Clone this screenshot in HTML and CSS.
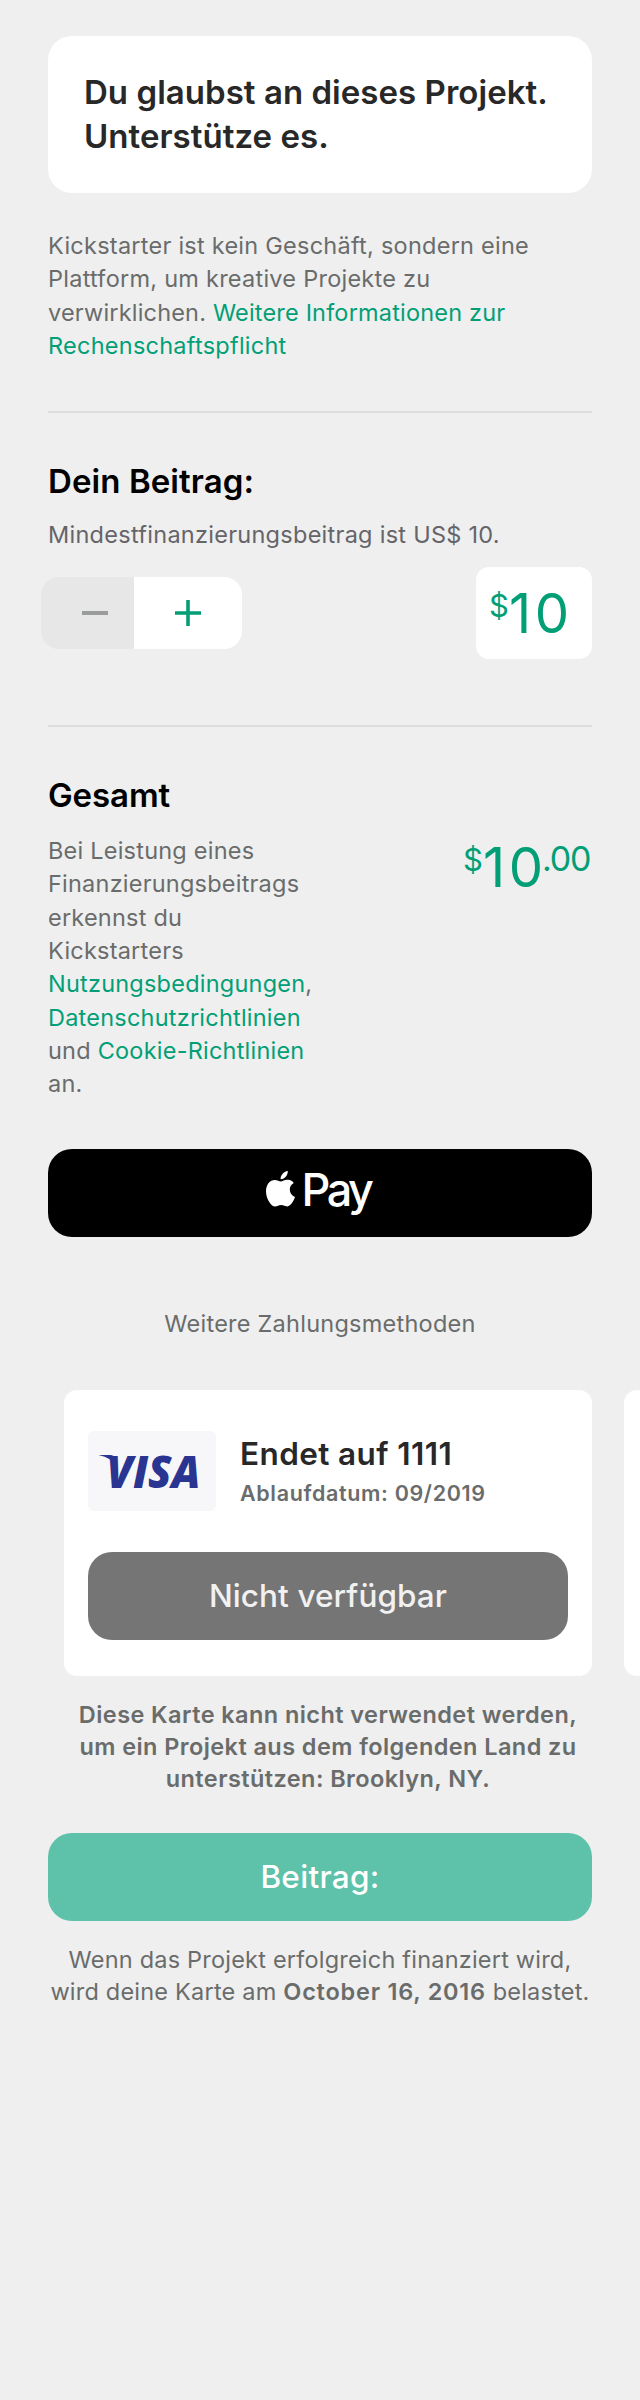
FILE: index.html
```
<!DOCTYPE html>
<html lang="de">
<head>
<meta charset="utf-8">
<title>Kickstarter – Beitrag</title>
<link rel="stylesheet" href="styles.css">
</head>
<body>
<main class="page">
  <header class="banner">Du glaubst an dieses Projekt.<br>Unterstütze es.</header>
  <p class="copy intro">Kickstarter ist kein Geschäft, sondern eine<br>Plattform, um kreative Projekte zu<br><span class="tight">verwirklichen. <a class="link">Weitere Informationen zur</a></span><br><a class="link">Rechenschaftspflicht</a></p>

  <section class="section pledge">
    <h2 class="heading">Dein Beitrag:</h2>
    <p class="copy minimum">Mindestfinanzierungsbeitrag ist US$ 10.</p>
    <div class="pledge-row">
      <div class="stepper">
        <button class="step step-minus" aria-label="Weniger"><svg width="26" height="26" viewBox="0 0 26 26"><path d="M0 13h26" stroke="#9b9d9d" stroke-width="4"/></svg></button>
        <button class="step step-plus" aria-label="Mehr"><svg width="26" height="26" viewBox="0 0 26 26"><path d="M0 13h26M13 0v26" stroke="#029f76" stroke-width="3.6"/></svg></button>
      </div>
      <div class="amount amount-box"><span class="currency">$</span><span class="whole">10</span></div>
    </div>
  </section>

  <section class="section total">
    <h2 class="heading heading-total">Gesamt</h2>
    <div class="total-row">
      <p class="copy terms">Bei Leistung eines<br>Finanzierungsbeitrags<br>erkennst du<br>Kickstarters<br><a class="link">Nutzungsbedingungen</a>,<br><a class="link">Datenschutzrichtlinien</a><br>und <a class="link">Cookie-Richtlinien</a><br>an.</p>
      <div class="amount"><span class="currency">$</span><span class="whole">10</span><span class="cents">.00</span></div>
    </div>
  </section>

  <button class="button apple-pay">
    <svg class="apple" width="29" height="36" viewBox="0 0 29 36" fill="#fff"><path d="M21.8 0C22 3.600 19.100 8.100 14.600 8.200 14.200 4.600 17.600.5 21.800 0Z"/><path d="M27.8 12.100c-2.700 1.600-4 3.700-4 6.500 0 3.400 2 6.200 5.200 7.400-1.200 3.600-4.200 9.200-7.700 9.400-2.300.1-3.500-1.300-6.100-1.300s-4 1.400-6 1.500C5 35.800 0 27.500 0 20.300 0 13.300 4 9 8.800 8.900c2.600 0 4.500 1.600 6 1.600 1.700 0 4-1.900 7.200-1.700 2.600.1 4.700 1.300 5.800 3.300Z"/></svg>
    <span class="pay">Pay</span>
  </button>
  <p class="copy methods">Weitere Zahlungsmethoden</p>

  <div class="cards">
    <article class="card">
      <div class="card-info">
        <div class="brand">
          <svg width="128" height="80" viewBox="0 0 128 80" role="img" aria-label="Visa">
            <path d="M10.500 24H22q4.500 0 5 4l1 7q-4-8-17.500-11Z" fill="#2a3491"/>
            <text class="visa" x="18.500" y="56.500" textLength="94" lengthAdjust="spacingAndGlyphs">VISA</text>
          </svg>
        </div>
        <div class="card-text">
          <div class="card-number">Endet auf 1111</div>
          <div class="card-expiry">Ablaufdatum: 09/2019</div>
        </div>
      </div>
      <button class="button unavailable">Nicht verfügbar</button>
    </article>
    <article class="card"></article>
  </div>
  <p class="copy note">Diese Karte kann nicht verwendet werden,<br>um ein Projekt aus dem folgenden Land zu<br>unterstützen: Brooklyn, NY.</p>

  <button class="button submit">Beitrag:</button>
  <p class="copy charge">Wenn das Projekt erfolgreich finanziert wird,<br>wird deine Karte am <b class="date">October 16, 2016</b> belastet.</p>
</main>
</body>
</html>
```
FILE: styles.css
```
* { box-sizing: border-box; }
body {
  margin: 0;
  background: #efefef;
  font-family: Inter, "Liberation Sans", sans-serif;
}
.page {
  width: 640px;
  min-height: 2400px;
  padding: 36px 48px 0;
  overflow: hidden;
}
p, h2 { margin: 0; }
button { border: 0; padding: 0; font-family: inherit; }

.banner {
  height: 157px;
  padding: 34px 36px 0;
  border-radius: 24px;
  background: #fff;
  color: #282828;
  font-size: 33px;
  font-weight: 600;
  line-height: 44px;
  letter-spacing: 0.04px;
  white-space: nowrap;
}
.copy {
  color: #696c6b;
  font-size: 23.5px;
  line-height: 33.3px;
  letter-spacing: 0.25px;
  white-space: nowrap;
}
.link { color: #029f76; }
.tight { letter-spacing: 0.18px; }
.intro { margin: 36px 0 49px; }

.section { border-top: 2px solid #dcdcdc; padding-top: 48px; }
.heading {
  color: #000;
  font-size: 33px;
  font-weight: 600;
  line-height: 40px;
  letter-spacing: 0.08px;
}
.heading-total { letter-spacing: -0.1px; }
.minimum { margin-top: 17px; color: #656469; letter-spacing: 0.27px; }

.pledge { height: 314px; }
.pledge-row {
  display: flex;
  align-items: center;
  justify-content: space-between;
  margin: 16px 0 0 -7px;
}
.stepper {
  display: flex;
  width: 201px;
  height: 72px;
  border-radius: 18px;
  overflow: hidden;
}
.step { display: flex; align-items: center; }
.step-minus { width: 93px; padding-left: 41px; background: #e7e7e7; }
.step-plus { flex: 1; padding-left: 41px; background: #fff; }

.amount {
  display: flex;
  align-items: flex-start;
  color: #029f76;
  white-space: nowrap;
}
.amount-box {
  width: 116px;
  height: 92px;
  padding: 13px 0 0 13px;
  border-radius: 13px;
  background: #fff;
}
.currency { width: 20px; padding-top: 5px; font-size: 31px; line-height: 42px; }
.whole { width: 59px; font-size: 54.5px; line-height: 66px; letter-spacing: 3.5px; }
.cents { width: 50px; font-size: 34px; line-height: 42px; padding-top: 4px; font-weight: 400; letter-spacing: -1.2px; }

.total-row {
  display: flex;
  justify-content: space-between;
  margin-top: 19px;
  margin-bottom: -1px;
}
.terms { letter-spacing: 0.22px; }

.button {
  display: flex;
  align-items: center;
  justify-content: center;
  width: 100%;
  height: 88px;
  border-radius: 24px;
  color: #fff;
  font-size: 31.5px;
  font-weight: 500;
}
.apple-pay { margin-top: 49px; padding: 22px 3px 0 0; background: #000; align-items: flex-start; gap: 6px; }
.pay { font-size: 45px; line-height: 38px; font-weight: 500; letter-spacing: -3.4px; }
.methods { margin: 70px 0 50px; text-align: center; }

.cards { display: flex; gap: 32px; margin-left: 16px; }
.card {
  flex: none;
  width: 528px;
  height: 286px;
  padding: 41px 24px 0;
  border-radius: 13px;
  background: #fff;
}
.card-info { display: flex; gap: 24px; margin-bottom: 41px; }
.brand { width: 128px; height: 80px; border-radius: 6px; background: #f7f7fa; }
.brand svg { display: block; }
.visa {
  fill: #2a3491;
  font-family: "Open Sans", "Noto Sans", sans-serif;
  font-size: 45px;
  font-style: italic;
  font-weight: 800;
}
.card-text { white-space: nowrap; }
.card-number {
  padding-top: 3px;
  color: #282828;
  font-size: 31.5px;
  font-weight: 600;
  line-height: 40px;
  letter-spacing: 0.4px;
}
.card-expiry {
  padding-top: 4px;
  color: #696c6b;
  font-size: 21.5px;
  font-weight: 600;
  line-height: 30px;
  letter-spacing: 0.65px;
}
.unavailable { background: #757575; color: #f1f1f1; letter-spacing: 0.08px; }

.note {
  margin: 23px 0 38px 16px;
  font-weight: 600;
  line-height: 32px;
  letter-spacing: 0.42px;
  text-align: center;
}
.submit { background: #5ec1a9; letter-spacing: 0.3px; }
.charge {
  margin: 23px -10px 0;
  line-height: 32px;
  letter-spacing: 0.21px;
  text-align: center;
}
.date { font-weight: 600; letter-spacing: 0.77px; }
```
